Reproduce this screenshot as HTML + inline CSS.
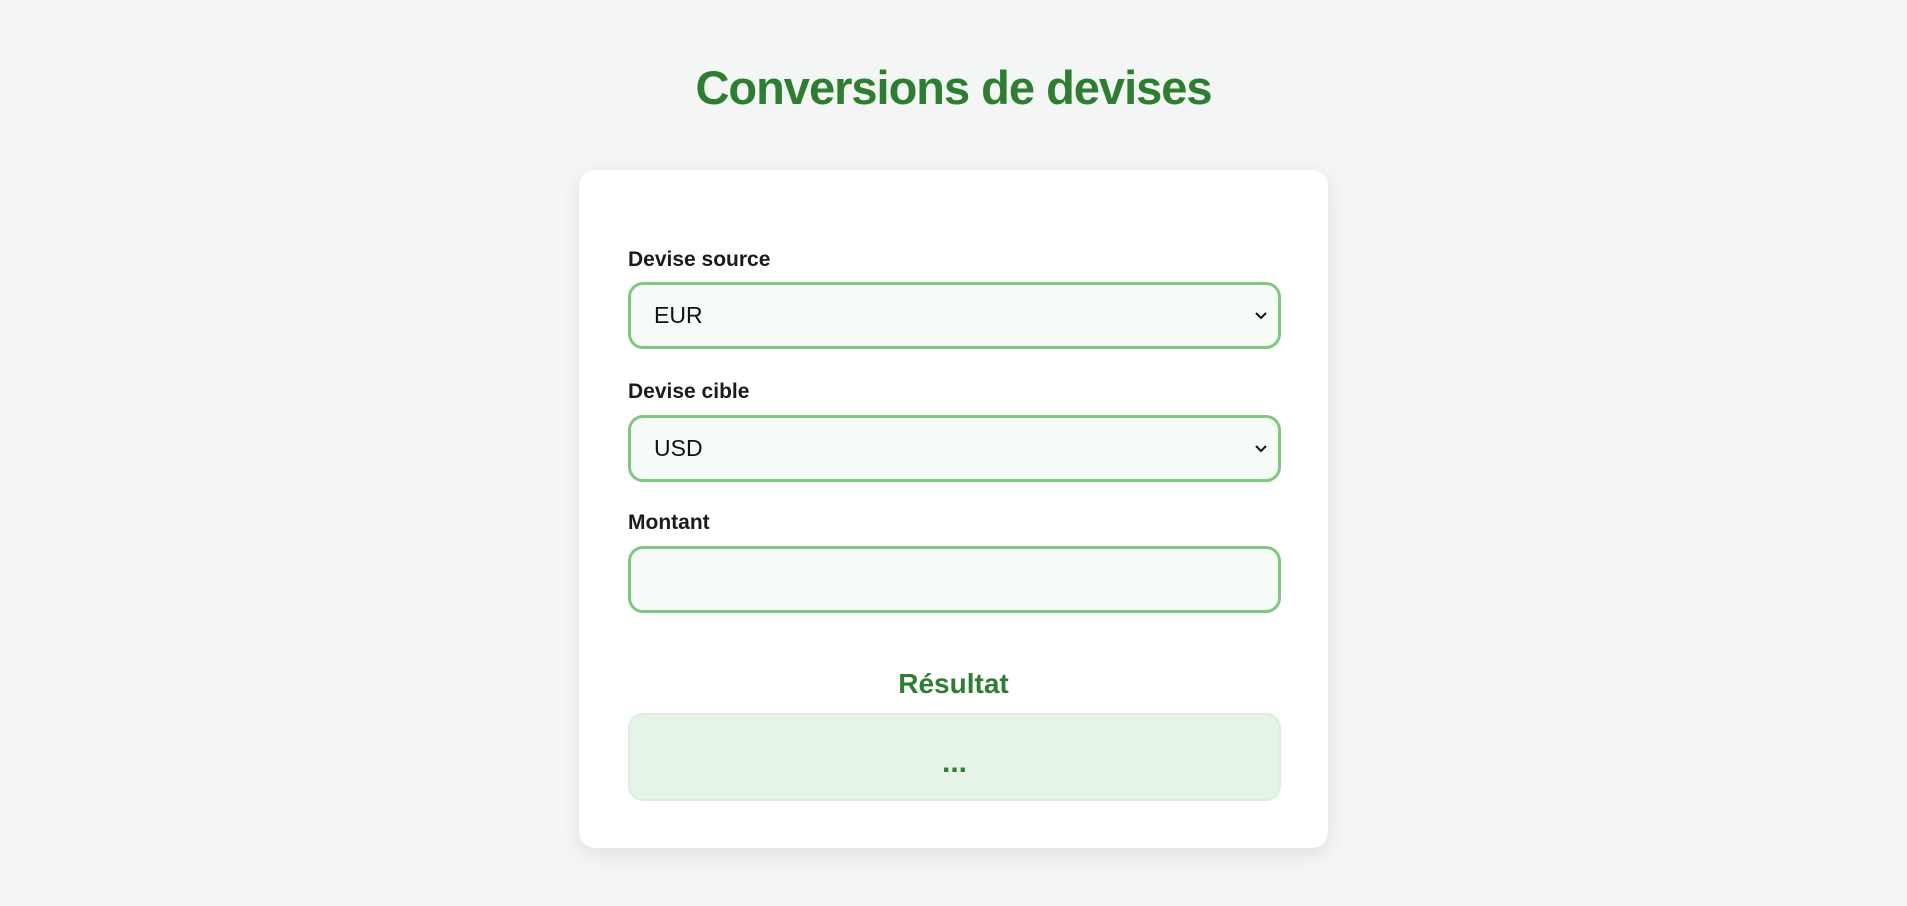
<!DOCTYPE html>
<html><head><meta charset="utf-8"><style>
*{box-sizing:border-box;margin:0;padding:0}
body{width:1907px;height:906px;background:#f4f6f5;font-family:"Liberation Sans",sans-serif;position:relative;overflow:hidden}
h1{position:absolute;left:0;right:0;top:58px;text-align:center;color:#2e7d32;font-size:47px;font-weight:bold;letter-spacing:-1px;line-height:60px}
.card{position:absolute;left:579px;top:170px;width:749px;height:678px;background:#fff;border-radius:16px;box-shadow:0 6px 20px rgba(0,0,0,0.09)}
.lbl{position:absolute;left:49px;font-size:21px;font-weight:bold;color:#1b1b1b;line-height:26px}
.fld{position:absolute;left:49px;width:653px;height:67px;border:3px solid #81c784;border-radius:15px;background:#f6fbf7;font-size:23px;color:#111;padding-left:23px;line-height:61px}
.chev{position:absolute;right:10px;top:26px;width:14px;height:10px}
.res{position:absolute;left:0;right:0;top:497px;text-align:center;color:#2e7d32;font-size:28px;font-weight:bold;line-height:34px}
.box{position:absolute;left:49px;top:543px;width:653px;height:88px;background:#e6f4e7;border:2px solid #dcefdd;border-radius:15px;text-align:center;color:#2e7d32;font-size:30px;font-weight:bold;line-height:84px;padding-top:6px}
</style></head><body>
<h1>Conversions de devises</h1>
<div class="card">
<div class="lbl" style="top:77px">Devise source</div>
<div class="fld" style="top:112px">EUR<svg class="chev" viewBox="0 0 14 10"><path d="M2 2 L7 7 L12 2" fill="none" stroke="#111" stroke-width="2"/></svg></div>
<div class="lbl" style="top:209px">Devise cible</div>
<div class="fld" style="top:245px">USD<svg class="chev" viewBox="0 0 14 10"><path d="M2 2 L7 7 L12 2" fill="none" stroke="#111" stroke-width="2"/></svg></div>
<div class="lbl" style="top:340px">Montant</div>
<div class="fld" style="top:376px"></div>
<div class="res">Résultat</div>
<div class="box">...</div>
</div>
</body></html>
